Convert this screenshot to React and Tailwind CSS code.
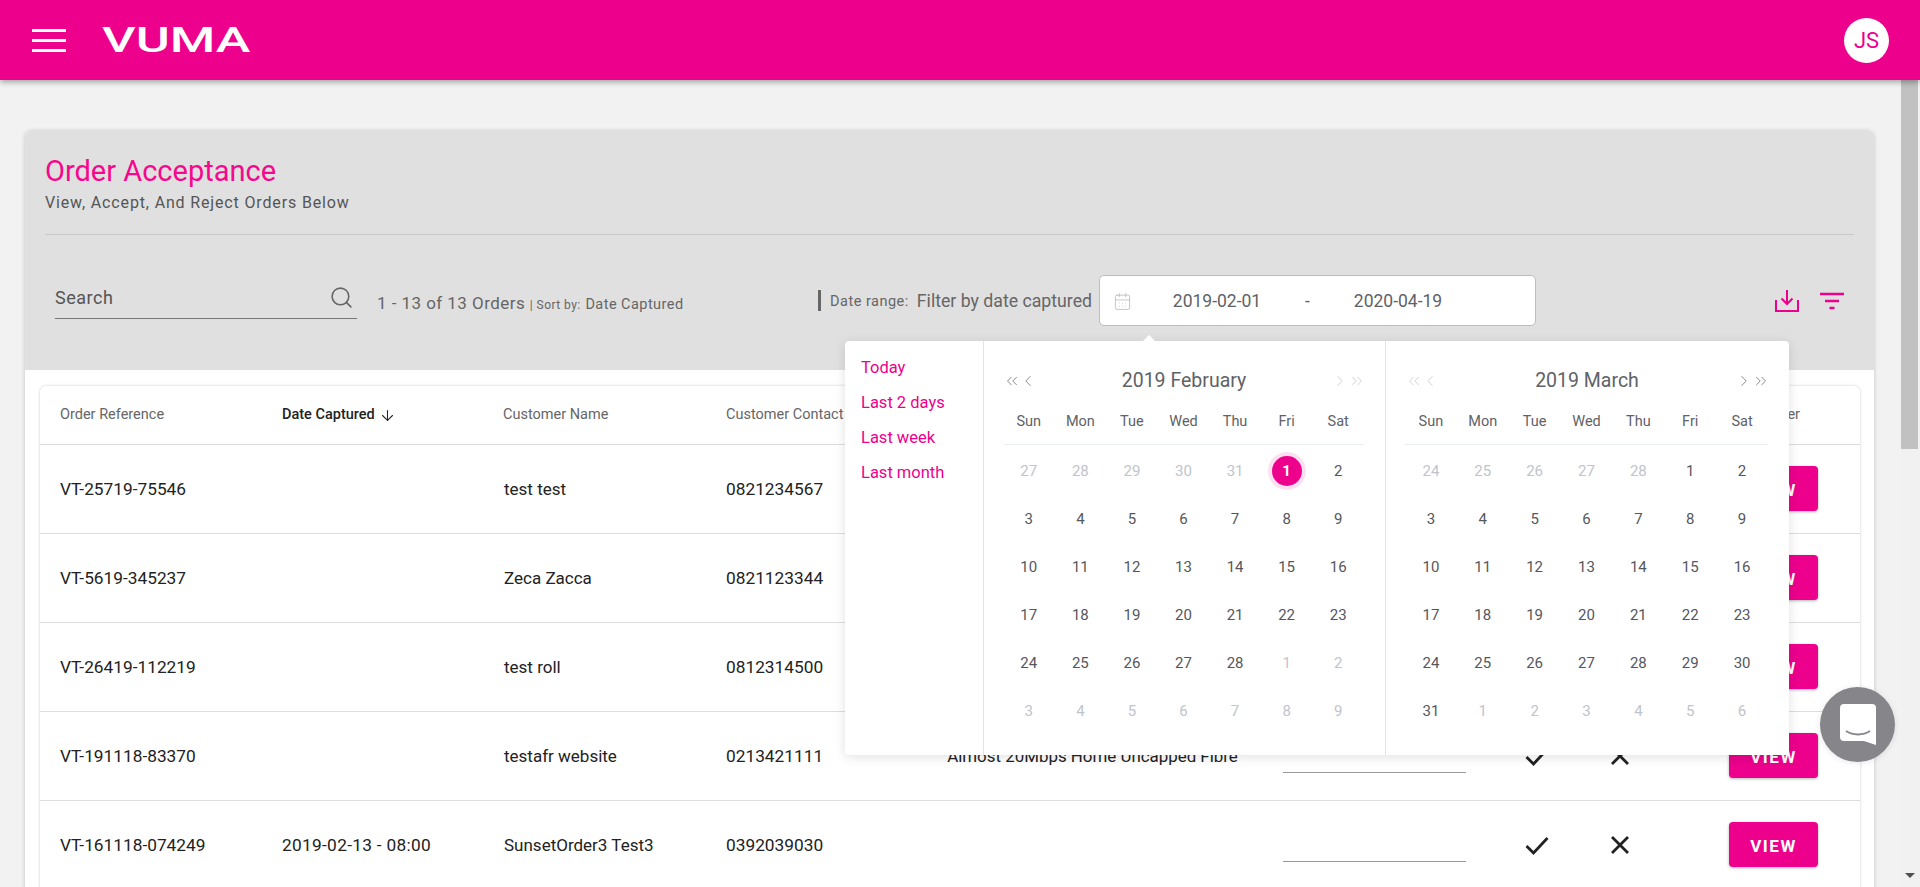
import { Search, CalendarDays, ArrowDown, ChevronLeft, ChevronRight, ChevronsLeft, ChevronsRight } from "lucide-react";

const ORDERS = [
  { ref: "VT-25719-75546", date: "", name: "test test", phone: "0821234567", pkg: "" },
  { ref: "VT-5619-345237", date: "", name: "Zeca Zacca", phone: "0821123344", pkg: "" },
  { ref: "VT-26419-112219", date: "", name: "test roll", phone: "0812314500", pkg: "" },
  { ref: "VT-191118-83370", date: "", name: "testafr website", phone: "0213421111", pkg: "Almost 20Mbps Home Uncapped Fibre" },
  { ref: "VT-161118-074249", date: "2019-02-13 - 08:00", name: "SunsetOrder3 Test3", phone: "0392039030", pkg: "" },
];

const DAY_NAMES = ["Sun", "Mon", "Tue", "Wed", "Thu", "Fri", "Sat"];

// cada celda: [dia, fuera del mes]
const buildDays = (prevStart, prevEnd, total, nextCount) => {
  const days = [];
  for (let d = prevStart; d <= prevEnd; d++) days.push([d, true]);
  for (let d = 1; d <= total; d++) days.push([d, false]);
  for (let d = 1; d <= nextCount; d++) days.push([d, true]);
  return days;
};

const FEB = buildDays(27, 31, 28, 9);
const MAR = buildDays(24, 28, 31, 6);

const Calendar = ({ title, days, selected, leftOn, rightOn, className }) => (
  <div className={`flex flex-col pl-[19px] pr-[21px] ${className}`}>
    <div className="flex items-center h-[26px] mt-[27px]">
      <div className={`flex items-center -space-x-[2px] ${leftOn ? "text-[#606266]" : "text-[#c0c4cc]"}`}>
        <ChevronsLeft size={18} strokeWidth={1} />
        <ChevronLeft size={18} strokeWidth={1} />
      </div>
      <div className="flex-1 text-center text-[19.500px] text-[#606266]">{title}</div>
      <div className={`flex items-center -space-x-[1px] -mr-[2px] ${rightOn ? "text-[#606266]" : "text-[#c0c4cc]"}`}>
        <ChevronRight size={18} strokeWidth={1} />
        <ChevronsRight size={18} strokeWidth={1} />
      </div>
    </div>
    <div className="grid grid-cols-7 h-[46px] mt-[5px] border-b border-[#ebeef5] items-center text-[14.500px] text-[#606266] text-center">
      {DAY_NAMES.map((d) => (
        <span key={d}>{d}</span>
      ))}
    </div>
    <div className="grid grid-cols-7 auto-rows-[48px] mt-[2px] text-[15px] text-center">
      {days.map(([d, off], i) => (
        <div key={i} className="flex items-center justify-center">
          {selected === d && !off ? (
            <span className="flex items-center justify-center w-[30px] h-[30px] rounded-full bg-[#ec008c] text-white font-bold ring-4 ring-[#fbe0f1]">
              {d}
            </span>
          ) : (
            <span className={off ? "text-[#c0c4cc]" : "text-[#55575c]"}>{d}</span>
          )}
        </div>
      ))}
    </div>
  </div>
);

const App = () => {
  return (
    <div className="relative h-[887px] overflow-hidden flex flex-col bg-[#f2f2f2] font-['Roboto',sans-serif]">
      {/* Barra superior */}
      <header className="relative z-10 h-20 shrink-0 flex items-center pl-8 pr-[31px] bg-[#ec008c] shadow-[0_2px_6px_rgba(0,0,0,0.35)]">
        <div className="flex flex-col gap-[7px] w-[34px]">
          <span className="h-[3px] bg-white" />
          <span className="h-[3px] bg-white" />
          <span className="h-[3px] bg-white" />
        </div>
        <span className="ml-9 text-white text-[35px] leading-none font-medium origin-left scale-x-[1.49]">VUMA</span>
        <div className="ml-auto flex items-center justify-center w-[45px] h-[45px] rounded-full bg-white text-[#ec008c] text-[22px]">
          JS
        </div>
      </header>

      <div className="flex flex-1 min-h-0">
        <main className="flex-1 min-w-0 overflow-hidden pl-[25px] pr-[27px] pt-[50px]">
          <section className="rounded-t-md bg-white shadow-[0_1px_4px_rgba(0,0,0,0.2)]">
            {/* Cabecera gris */}
            <div className="h-[240px] rounded-t-md bg-[#e0e0e0] px-5 pt-[21px]">
              <h1 className="text-[29px] leading-[40px] text-[#f7078c]">Order Acceptance</h1>
              <p className="text-[16px] leading-5 mt-[2px] text-[#555] tracking-[0.85px]">View, Accept, And Reject Orders Below</p>
              <div className="h-px mt-[21px] bg-[#c9c9c9]" />

              <div className="flex items-center mt-[40px] h-[52px]">
                {/* Buscador */}
                <div className="flex items-center justify-between ml-[10px] mb-[6px] w-[302px] h-[42px] border-b border-[#777] text-[18px] text-[#555] pr-[3px]">
                  <span className="tracking-[0.5px]">Search</span>
                  <Search size={25} strokeWidth={1.5} className="text-[#666]" />
                </div>
                <div className="ml-5 mt-[5px] w-[441px] text-[17px] text-[#666] whitespace-nowrap tracking-[0.45px]">
                  1 - 13 of 13 Orders <span className="text-[12px]">| Sort by:</span> <span className="text-[14.500px]">Date Captured</span>
                </div>
                <span className="w-[3px] h-[21px] bg-[#666] mb-[2px]" />
                <span className="ml-[9px] mt-[2px] text-[14.500px] text-[#666] tracking-[0.5px]">Date range:</span>
                <span className="ml-2 text-[17.700px] text-[#666]">Filter by date captured</span>

                {/* Rango de fechas */}
                <div className="ml-auto mb-[2px] pt-[2px] flex items-center w-[437px] h-[51px] rounded-[5px] border border-[#bdbdbd] bg-white text-[17.500px] text-[#606266] pl-[13px]">
                  <CalendarDays size={19} strokeWidth={1} className="text-[#b5b8bf]" />
                  <span className="ml-[40px] w-[90px] text-center">2019-02-01</span>
                  <span className="w-[91px] text-center">-</span>
                  <span className="w-[90px] text-center">2020-04-19</span>
                </div>

                <div className="flex items-center ml-[239px] mr-[9px] gap-5 text-[#ec008c]">
                  <svg width="24" height="24" viewBox="0 0 24 24" fill="none" stroke="currentColor" strokeWidth="2">
                    <path d="M12 1v14M6.500 9.500 12 15l5.500-5.500M1 11v11h22V11" />
                  </svg>
                  <svg className="mb-[1px]" width="26" height="24" viewBox="0 0 26 24" fill="none" stroke="currentColor" strokeWidth="2.500">
                    <path d="M1 5h24M6 12h14M10.500 19h5" />
                  </svg>
                </div>
              </div>
            </div>

            {/* Tabla de ordenes */}
            <div className="pl-[15px] pr-[14px] pt-4">
              <div className="rounded-t-md bg-white shadow-[0_0_3px_rgba(0,0,0,0.2)]">
                <div className="grid grid-cols-[222px_221px_223px_176px_564px_1fr] items-center h-[59px] pl-5 border-b border-[#ddd] text-[14.500px] text-[#666]">
                  <span>Order Reference</span>
                  <span className="flex items-center gap-1 font-medium text-[#222]">
                    Date Captured <ArrowDown size={17} strokeWidth={1.5} />
                  </span>
                  <span>Customer Name</span>
                  <span>Customer Contact</span>
                  <span />
                  <span className="text-right pr-[60px]">Order</span>
                </div>
                {ORDERS.map((o) => (
                  <div
                    key={o.ref}
                    className="grid grid-cols-[222px_221px_223px_176px_381px_183px_142px_24px_1fr] items-center h-[89px] pl-5 border-b border-[#ddd] text-[17.300px] text-[#222]"
                  >
                    <span className="pt-[2px]">{o.ref}</span>
                    <span className="pt-[2px] tracking-[0.3px]">{o.date}</span>
                    <span className="pt-[2px] ml-[1px] text-[17px]">{o.name}</span>
                    <span className="pt-[2px]">{o.phone}</span>
                    <span className="pt-[2px] text-center whitespace-nowrap text-[16.900px]">{o.pkg}</span>
                    <div className="self-start h-[61px] border-b border-[#999]" />
                    <div className="flex justify-center">
                      <svg width="24" height="24" viewBox="0 0 24 24" fill="none" stroke="currentColor" strokeWidth="2.800">
                        <path d="M1.500 13 8.500 20 22.500 5" />
                      </svg>
                    </div>
                    <div className="flex justify-center">
                      <svg width="24" height="24" viewBox="0 0 24 24" fill="none" stroke="currentColor" strokeWidth="2.800">
                        <path d="M4 4 20 20M20 4 4 20" />
                      </svg>
                    </div>
                    <div className="flex justify-end pr-[42px] mb-[1px]">
                      <button className="w-[89px] h-[45px] pt-[5px] rounded-[4px] bg-[#ec008c] text-white font-bold text-[17px] tracking-[1.5px] shadow-[0_1px_3px_rgba(0,0,0,0.3)]">
                        VIEW
                      </button>
                    </div>
                  </div>
                ))}
              </div>
            </div>
          </section>
        </main>

        {/* Barra de scroll */}
        <div className="relative w-[19px] shrink-0 bg-[#f1f1f1]">
          <div className="w-[17px] h-[369px] bg-[#c1c1c1]" />
          <div className="absolute bottom-[9px] left-[4px] w-0 h-0 border-x-[5px] border-x-transparent border-t-[5px] border-t-[#505050]" />
        </div>
      </div>

      {/* Selector de fechas */}
      <div className="absolute z-20 top-[341px] left-[845px] w-[944px] h-[414px] flex rounded-[4px] bg-white shadow-[0_2px_12px_rgba(0,0,0,0.12)]">
        <div className="absolute -top-[6px] left-[298px] w-0 h-0 border-x-[6px] border-x-transparent border-b-[6px] border-b-white" />
        <div className="w-[139px] shrink-0 border-r border-[#e4e4e4] pl-4 pt-[9px] text-[16.500px] text-[#ec008c]">
          <div className="h-[35px] leading-[35px]">Today</div>
          <div className="h-[35px] leading-[35px]">Last 2 days</div>
          <div className="h-[35px] leading-[35px]">Last week</div>
          <div className="h-[35px] leading-[35px]">Last month</div>
        </div>
        <Calendar title="2019 February" days={FEB} selected={1} leftOn className="w-[402px] border-r border-[#e4e4e4]" />
        <Calendar title="2019 March" days={MAR} rightOn className="flex-1" />
      </div>

      {/* Boton de chat */}
      <div className="absolute z-30 left-[1820px] top-[687px] flex items-center justify-center w-[75px] h-[75px] rounded-full bg-[#85858a] shadow-[0_1px_6px_rgba(0,0,0,0.1)]">
        <svg width="36" height="41" viewBox="0 0 36 41">
          <path d="M4 0h28a4 4 0 0 1 4 4v37l-12-4H4a4 4 0 0 1-4-4V4a4 4 0 0 1 4-4z" fill="#fff" />
          <path d="M6 27c7 4.500 17 4.500 24 0" fill="none" stroke="#85858a" strokeWidth="2" />
        </svg>
      </div>
    </div>
  );
};

export default App;
